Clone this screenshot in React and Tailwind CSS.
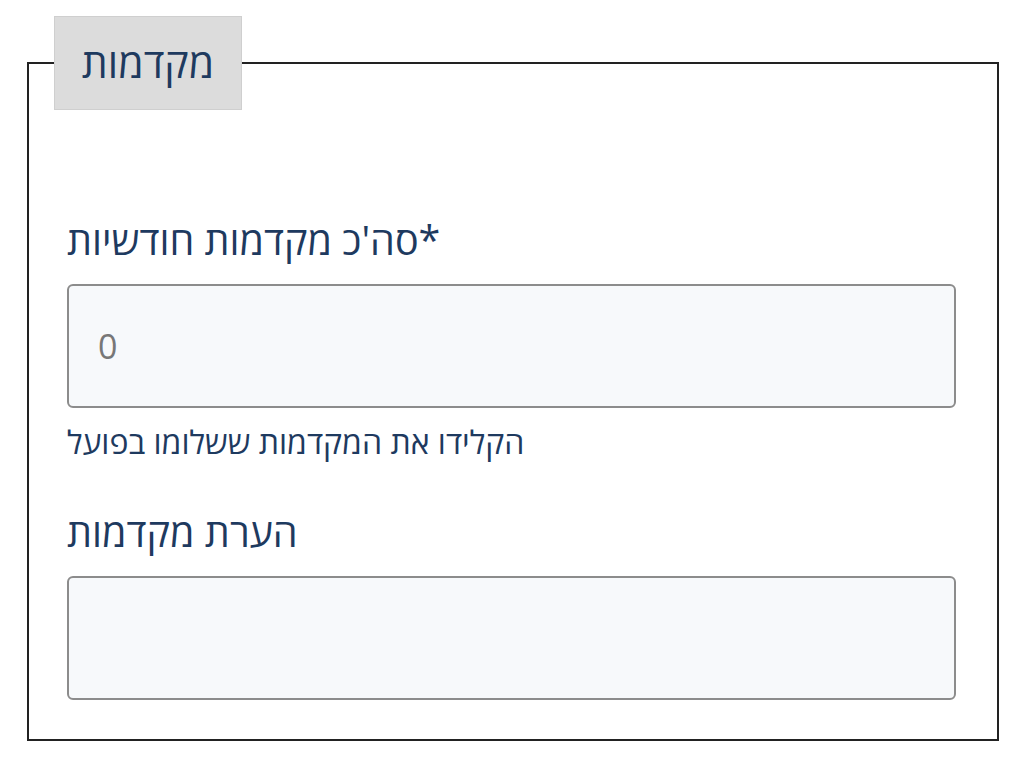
import React from 'react'

function App() {
  return (
    <div className="min-h-screen bg-white pt-[16px] pl-[27px] pr-[25px]" style={{ fontFamily: '"Open Sans", "DejaVu Sans", sans-serif' }}>
      <fieldset className="border-2 border-[#222222] w-[972px] pb-[39px]">
        <legend className="ml-[25px] w-[188px] h-[94px] bg-[#dcdcdc] border border-[#cfcfcf] flex items-center justify-center text-[41px] text-[#1e3a5f]">
          מקדמות
        </legend>

        <div className="pl-[38px] pr-[41px] pt-[110px]">
          <label className="block text-[39.5px] leading-[40px] text-[#1e3a5f] mb-[24px]">
            סה'כ מקדמות חודשיות*
          </label>
          <input
            type="text"
            placeholder="0"
            className="block w-full h-[124px] bg-[#f7f9fb] border-2 border-[#8c8c8c] rounded-[6px] px-[29px] text-[34px] text-[#333] placeholder:text-[#777777] outline-none"
          />
          <p className="mt-[19px] text-[32px] leading-[30px] text-[#1e3a5f]">
            הקלידו את המקדמות ששלומו בפועל
          </p>

          {/* second field */}
          <label className="block mt-[55px] text-[39.5px] leading-[40px] text-[#1e3a5f] mb-[24px]">
            הערת מקדמות
          </label>
          <textarea
            className="block w-full h-[124px] bg-[#f7f9fb] border-2 border-[#8c8c8c] rounded-[6px] px-[29px] text-[34px] resize-none outline-none"
          />
        </div>
      </fieldset>
    </div>
  )
}

export default App
